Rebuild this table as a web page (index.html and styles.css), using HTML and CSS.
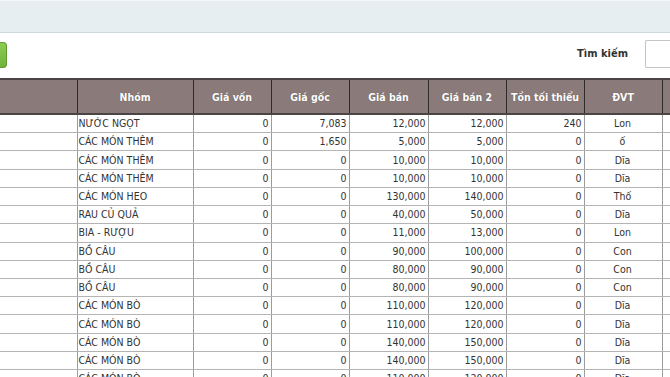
FILE: index.html
```html
<!DOCTYPE html>
<html>
<head>
<meta charset="utf-8">
<link rel="stylesheet" href="styles.css">
</head>
<body>
<div class="topbar"></div>
<div class="toolbar">
  <div class="btn-green"></div>
  <div class="search">
    <span class="search-label">Tìm kiếm</span>
    <div class="search-input"></div>
  </div>
</div>
<table class="grid">
  <colgroup>
    <col class="c0"><col class="c1"><col class="c2"><col class="c3"><col class="c4"><col class="c5"><col class="c6"><col class="c7"><col class="c8">
  </colgroup>
  <thead>
    <tr><th></th><th>Nhóm</th><th>Giá vốn</th><th>Giá gốc</th><th>Giá bán</th><th>Giá bán 2</th><th>Tồn tối thiểu</th><th>ĐVT</th><th></th></tr>
  </thead>
  <tbody>
    <tr><td></td><td class="t">NƯỚC NGỌT</td><td class="n">0</td><td class="n">7,083</td><td class="n">12,000</td><td class="n">12,000</td><td class="n">240</td><td class="c">Lon</td><td></td></tr>
    <tr><td></td><td class="t">CÁC MÓN THÊM</td><td class="n">0</td><td class="n">1,650</td><td class="n">5,000</td><td class="n">5,000</td><td class="n">0</td><td class="c">ố</td><td></td></tr>
    <tr><td></td><td class="t">CÁC MÓN THÊM</td><td class="n">0</td><td class="n">0</td><td class="n">10,000</td><td class="n">10,000</td><td class="n">0</td><td class="c">Dĩa</td><td></td></tr>
    <tr><td></td><td class="t">CÁC MÓN THÊM</td><td class="n">0</td><td class="n">0</td><td class="n">10,000</td><td class="n">10,000</td><td class="n">0</td><td class="c">Dĩa</td><td></td></tr>
    <tr><td></td><td class="t">CÁC MÓN HEO</td><td class="n">0</td><td class="n">0</td><td class="n">130,000</td><td class="n">140,000</td><td class="n">0</td><td class="c">Thố</td><td></td></tr>
    <tr><td></td><td class="t">RAU CỦ QUẢ</td><td class="n">0</td><td class="n">0</td><td class="n">40,000</td><td class="n">50,000</td><td class="n">0</td><td class="c">Dĩa</td><td></td></tr>
    <tr><td></td><td class="t">BIA - RƯỢU</td><td class="n">0</td><td class="n">0</td><td class="n">11,000</td><td class="n">13,000</td><td class="n">0</td><td class="c">Lon</td><td></td></tr>
    <tr><td></td><td class="t">BỒ CÂU</td><td class="n">0</td><td class="n">0</td><td class="n">90,000</td><td class="n">100,000</td><td class="n">0</td><td class="c">Con</td><td></td></tr>
    <tr><td></td><td class="t">BỒ CÂU</td><td class="n">0</td><td class="n">0</td><td class="n">80,000</td><td class="n">90,000</td><td class="n">0</td><td class="c">Con</td><td></td></tr>
    <tr><td></td><td class="t">BỒ CÂU</td><td class="n">0</td><td class="n">0</td><td class="n">80,000</td><td class="n">90,000</td><td class="n">0</td><td class="c">Con</td><td></td></tr>
    <tr><td></td><td class="t">CÁC MÓN BÒ</td><td class="n">0</td><td class="n">0</td><td class="n">110,000</td><td class="n">120,000</td><td class="n">0</td><td class="c">Dĩa</td><td></td></tr>
    <tr><td></td><td class="t">CÁC MÓN BÒ</td><td class="n">0</td><td class="n">0</td><td class="n">110,000</td><td class="n">120,000</td><td class="n">0</td><td class="c">Dĩa</td><td></td></tr>
    <tr><td></td><td class="t">CÁC MÓN BÒ</td><td class="n">0</td><td class="n">0</td><td class="n">140,000</td><td class="n">150,000</td><td class="n">0</td><td class="c">Dĩa</td><td></td></tr>
    <tr><td></td><td class="t">CÁC MÓN BÒ</td><td class="n">0</td><td class="n">0</td><td class="n">140,000</td><td class="n">150,000</td><td class="n">0</td><td class="c">Dĩa</td><td></td></tr>
    <tr><td></td><td class="t">CÁC MÓN BÒ</td><td class="n">0</td><td class="n">0</td><td class="n">110,000</td><td class="n">120,000</td><td class="n">0</td><td class="c">Dĩa</td><td></td></tr>
  </tbody>
</table>
</body>
</html>
```
FILE: styles.css
```css
html, body {
  margin: 0;
  padding: 0;
  background: #ffffff;
  overflow: hidden;
  width: 670px;
  height: 377px;
}
body {
  font-family: "DejaVu Sans Condensed", "DejaVu Sans", sans-serif;
  font-size: 10.5px;
  color: #333333;
}
.topbar {
  background: #e7eef1;
  border-top: 1px solid #f2f6f7;
  border-bottom: 1px solid #cfd9de;
  box-sizing: border-box;
  height: 33px;
}
.toolbar {
  display: flex;
  align-items: center;
  justify-content: space-between;
  height: 45px;
  box-sizing: border-box;
}
.btn-green {
  width: 7px;
  height: 26px;
  margin-top: -2px;
  background: linear-gradient(#8ccd52, #6fb33a);
  border: 1px solid #5d9a32;
  border-left: none;
  border-radius: 0 4px 4px 0;
  box-sizing: border-box;
}
.search {
  display: flex;
  align-items: center;
  gap: 17px;
  margin-top: -4px;
}
.search-label {
  font-weight: bold;
  font-size: 11px;
  color: #333;
}
.search-input {
  width: 25px;
  height: 28px;
  border: 1px solid #c4c4c4;
  border-right: none;
  border-radius: 2px 0 0 2px;
  box-sizing: border-box;
  background: #fff;
}
.grid {
  border-collapse: collapse;
  table-layout: fixed;
  width: 670px;
}
.c0 { width: 77px; }
.c1 { width: 116px; }
.c2 { width: 78px; }
.c3 { width: 78px; }
.c4 { width: 79px; }
.c5 { width: 78px; }
.c6 { width: 78px; }
.c7 { width: 78px; }
.c8 { width: 8px; }
.grid thead th {
  background: #8b7a7a;
  color: #ffffff;
  font-weight: bold;
  font-size: 10.5px;
  height: 33px;
  padding: 0;
  border-top: 2px solid #4a4444;
  border-bottom: 2px solid #4a4444;
  border-left: 1px solid #2e2a2a;
  text-align: center;
  text-shadow: 0 0 1px rgba(0,0,0,0.35);
  white-space: nowrap;
  overflow: hidden;
}
.grid thead th:first-child { border-left: none; }
.grid tbody td {
  height: 17.23px;
  padding: 0 2px 0 1px;
  border-bottom: 1px solid #b4b4b4;
  border-left: 1px solid #9c9c9c;
  white-space: nowrap;
  overflow: hidden;
  line-height: 17px;
}
.grid tbody td:first-child { border-left: none; }
.t { text-align: left; }
.n { text-align: right; }
.c { text-align: center; }
```
